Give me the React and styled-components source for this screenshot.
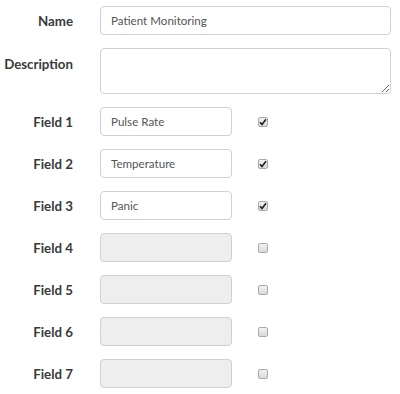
import styled, { createGlobalStyle } from "styled-components";

const GlobalStyle = createGlobalStyle`
  body {
    margin: 0;
    background: #fff;
    font-family: "Lato", "Open Sans", sans-serif;
  }
`;

const Form = styled.form`
  display: grid;
  grid-template-columns: 73px 132px 26px 10px;
  row-gap: 13px;
  padding: 6px 0 0 0;
  width: 400px;
  box-sizing: border-box;
  align-items: center;
`;

const Label = styled.label`
  grid-column: 1;
  justify-self: end;
  align-self: ${({ top }) => (top ? "start" : "center")};
  margin-top: ${({ top }) => (top ? "8px" : "1px")};
  font-size: 13.3px;
  font-weight: 700;
  color: #3a3a3a;
`;

const baseField = `
  box-sizing: border-box;
  border: 1px solid #d0d0d0;
  border-radius: 4px;
  font-family: "Lato", "Open Sans", sans-serif;
  font-size: 11.6px;
  color: #555;
  padding: 0 10px;
  outline: none;
`;

const WideInput = styled.input`
  ${baseField}
  grid-column: 2 / span 3;
  margin-left: 27px;
  width: 291px;
  height: 29px;
  background: #fff;
`;

const TextArea = styled.textarea`
  ${baseField}
  grid-column: 2 / span 3;
  margin-left: 27px;
  width: 291px;
  height: 46px;
  padding: 6px 10px;
  resize: vertical;
  background: #fff;
`;

const FieldInput = styled.input`
  ${baseField}
  grid-column: 2;
  margin-left: 27px;
  width: 132px;
  height: 29px;
  background: ${({ disabled }) => (disabled ? "#eeeeee" : "#fff")};
`;

const Check = styled.span`
  grid-column: 4;
  margin-left: 27px;
  width: 10px;
  height: 10px;
  box-sizing: border-box;
  border: 1px solid #a9a9a9;
  border-radius: 2px;
  background: linear-gradient(#f2f2f2, #d9d9d9);
  display: flex;
  align-items: center;
  justify-content: center;
`;

const fields = [
  { label: "Field 1", value: "Pulse Rate", checked: true },
  { label: "Field 2", value: "Temperature", checked: true },
  { label: "Field 3", value: "Panic", checked: true },
  { label: "Field 4", value: "", checked: false },
  { label: "Field 5", value: "", checked: false },
  { label: "Field 6", value: "", checked: false },
  { label: "Field 7", value: "", checked: false },
];

function CheckMark() {
  return (
    <svg width="8" height="8" viewBox="0 0 8 8">
      <path d="M1 4.2 L3 6.4 L7 1.2" fill="none" stroke="#222" strokeWidth="1.6" />
    </svg>
  );
}

function FieldRow({ field }) {
  const empty = field.value === "";
  return (
    <>
      <Label>{field.label}</Label>
      <FieldInput defaultValue={field.value} disabled={empty} />
      <Check aria-checked={field.checked} role="checkbox">
        {field.checked && <CheckMark />}
      </Check>
    </>
  );
}

export default function App() {
  return (
    <>
      <GlobalStyle />
      <Form onSubmit={(e) => e.preventDefault()}>
        <Label>Name</Label>
        <WideInput defaultValue="Patient Monitoring" />
        <Label top>Description</Label>
        <TextArea />
        {fields.map((f) => (
          <FieldRow key={f.label} field={f} />
        ))}
      </Form>
    </>
  );
}
